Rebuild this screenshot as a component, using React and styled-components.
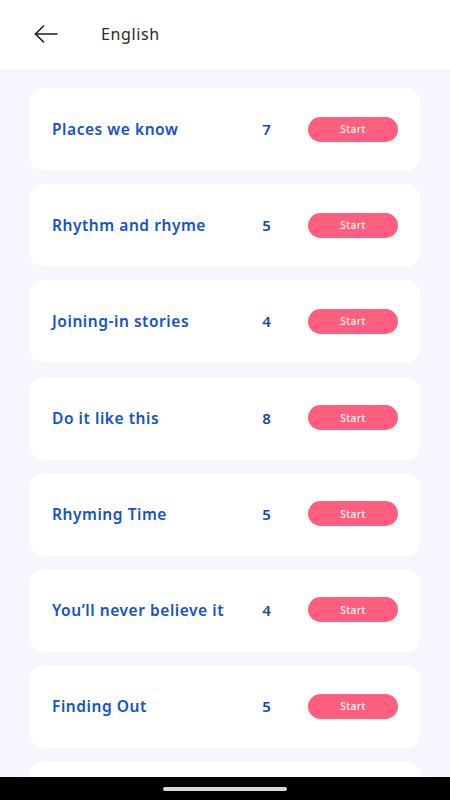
import React from "react";
import styled, { createGlobalStyle } from "styled-components";

const Global = createGlobalStyle`
  html, body { margin: 0; padding: 0; }
  body { font-family: "Noto Sans", "Open Sans", sans-serif; background: #f6f7fe; }
  * { box-sizing: border-box; }
`;

const Screen = styled.div`
  width: 450px;
  height: 800px;
  display: flex;
  flex-direction: column;
  background: #f6f7fe;
  overflow: hidden;
`;

const Header = styled.header`
  height: 69px;
  flex: none;
  background: #ffffff;
  display: flex;
  align-items: center;
  padding-left: 34px;
  padding-bottom: 1px;
  gap: 20px;
`;

const BackButton = styled.button`
  border: none;
  background: none;
  padding: 0;
  width: 24px;
  height: 24px;
  display: flex;
  align-items: center;
  justify-content: center;
  color: #1b1b1b;
`;

const Title = styled.h1`
  margin: 0;
  margin-left: 23px;
  font-size: 16px;
  font-weight: 400;
  color: #2a2a2a;
  letter-spacing: 0.6px;
`;

const List = styled.main`
  flex: 1;
  overflow: hidden;
  padding: 19px 30px 0;
  display: flex;
  flex-direction: column;
  gap: 13.2px;
`;

const Card = styled.div`
  flex: none;
  height: 83px;
  background: #ffffff;
  border-radius: 14px;
  display: grid;
  grid-template-columns: 1fr 36px 90px;
  align-items: center;
  padding: 0 22px 1px 22px;
  column-gap: 23.5px;
`;

const Name = styled.span`
  font-size: 15.5px;
  font-weight: 600;
  color: #1452c8;
  letter-spacing: 0.55px;
`;

const Count = styled.span`
  font-size: 15px;
  font-weight: 600;
  color: #1346b5;
  text-align: center;
`;

const StartButton = styled.button`
  width: 90px;
  height: 25px;
  border: none;
  border-radius: 13px;
  background: #ff5f7e;
  color: #ffffff;
  font-family: inherit;
  font-size: 10px;
  font-weight: 500;
  letter-spacing: 0.5px;
  padding: 0;
`;

const NavBar = styled.div`
  height: 23px;
  flex: none;
  background: #000000;
  display: flex;
  align-items: center;
  justify-content: center;
`;

const HomePill = styled.div`
  width: 124px;
  height: 4px;
  border-radius: 2px;
  background: #d8d8d8;
`;

const units = [
  ["Places we know", 7],
  ["Rhythm and rhyme", 5],
  ["Joining-in stories", 4],
  ["Do it like this", 8],
  ["Rhyming Time", 5],
  ["You\u2019ll never believe it", 4],
  ["Finding Out", 5],
];

export default function App() {
  return (
    <Screen>
      <Global />
      <Header>
        <BackButton aria-label="Back">
          <svg width="24" height="24" viewBox="0 0 24 24" fill="none" stroke="currentColor" strokeWidth="1.6" strokeLinecap="round" strokeLinejoin="round">
            <path d="M23 12H1.5" />
            <path d="M9.5 4L1.5 12L9.5 20" />
          </svg>
        </BackButton>
        <Title>English</Title>
      </Header>
      <List>
        {units.map(([name, n]) => (
          <Card key={name}>
            <Name>{name}</Name>
            <Count>{n}</Count>
            <StartButton>Start</StartButton>
          </Card>
        ))}
        <Card aria-hidden="true" />
      </List>
      <NavBar>
        <HomePill />
      </NavBar>
    </Screen>
  );
}
